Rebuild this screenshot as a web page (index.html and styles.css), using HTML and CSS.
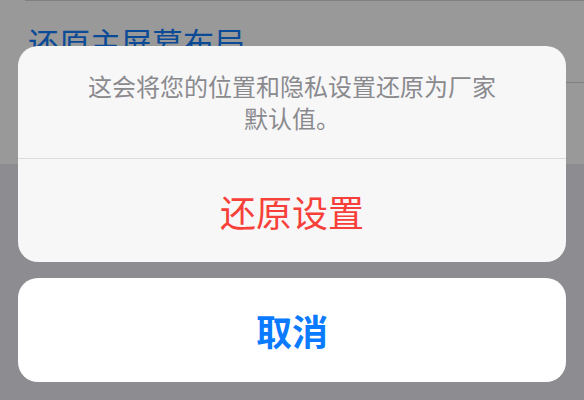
FILE: index.html
```html
<!DOCTYPE html>
<html lang="zh-CN">
<head>
<meta charset="utf-8">
<link rel="stylesheet" href="styles.css">
</head>
<body>
<div class="screen">
  <div class="list">
    <div class="sep-inset"></div>
    <div class="cell"><span class="cell-text">还原主屏幕布局</span></div>
    <div class="sep-inset"></div>
    <div class="cell"></div>
  </div>
  <div class="sheet">
    <div class="group">
      <div class="message">这会将您的位置和隐私设置还原为厂家默认值。</div>
      <div class="action destructive">还原设置</div>
    </div>
    <div class="group cancel-group">
      <div class="action cancel">取消</div>
    </div>
  </div>
</div>
</body>
</html>
```

FILE: styles.css
```css
html, body {
  margin: 0;
  padding: 0;
}
body {
  width: 584px;
  height: 400px;
  overflow: hidden;
  background: #8c8c91;
  font-family: "Noto Sans CJK SC", "Noto Sans", sans-serif;
}
.screen {
  position: relative;
  width: 584px;
  height: 400px;
}
.list {
  background: #999999;
}
.sep-inset {
  height: 1px;
  margin-left: 25px;
  background: #808080;
}
.cell {
  height: 81px;
  box-sizing: border-box;
  padding: 23px 0 0 28px;
}
.cell-text {
  font-size: 31px;
  line-height: 36px;
  color: #0a4a96;
}
.sheet {
  position: absolute;
  top: 46px;
  left: 18px;
  width: 548px;
  display: flex;
  flex-direction: column;
  gap: 16px;
}
.group {
  background: #f7f7f8;
  border-radius: 20px;
  overflow: hidden;
}
.cancel-group {
  background: #ffffff;
}
.message {
  box-sizing: border-box;
  height: 113px;
  padding: 24px 68px 0;
  font-size: 24px;
  line-height: 32px;
  color: #8a8a8e;
  text-align: center;
  border-bottom: 1px solid #dcdce0;
}
.action {
  display: flex;
  align-items: center;
  justify-content: center;
  height: 103px;
  font-size: 36px;
}
.destructive {
  color: #f8403a;
}
.cancel {
  height: 104px;
  color: #0a7bff;
  font-weight: 700;
}
```
